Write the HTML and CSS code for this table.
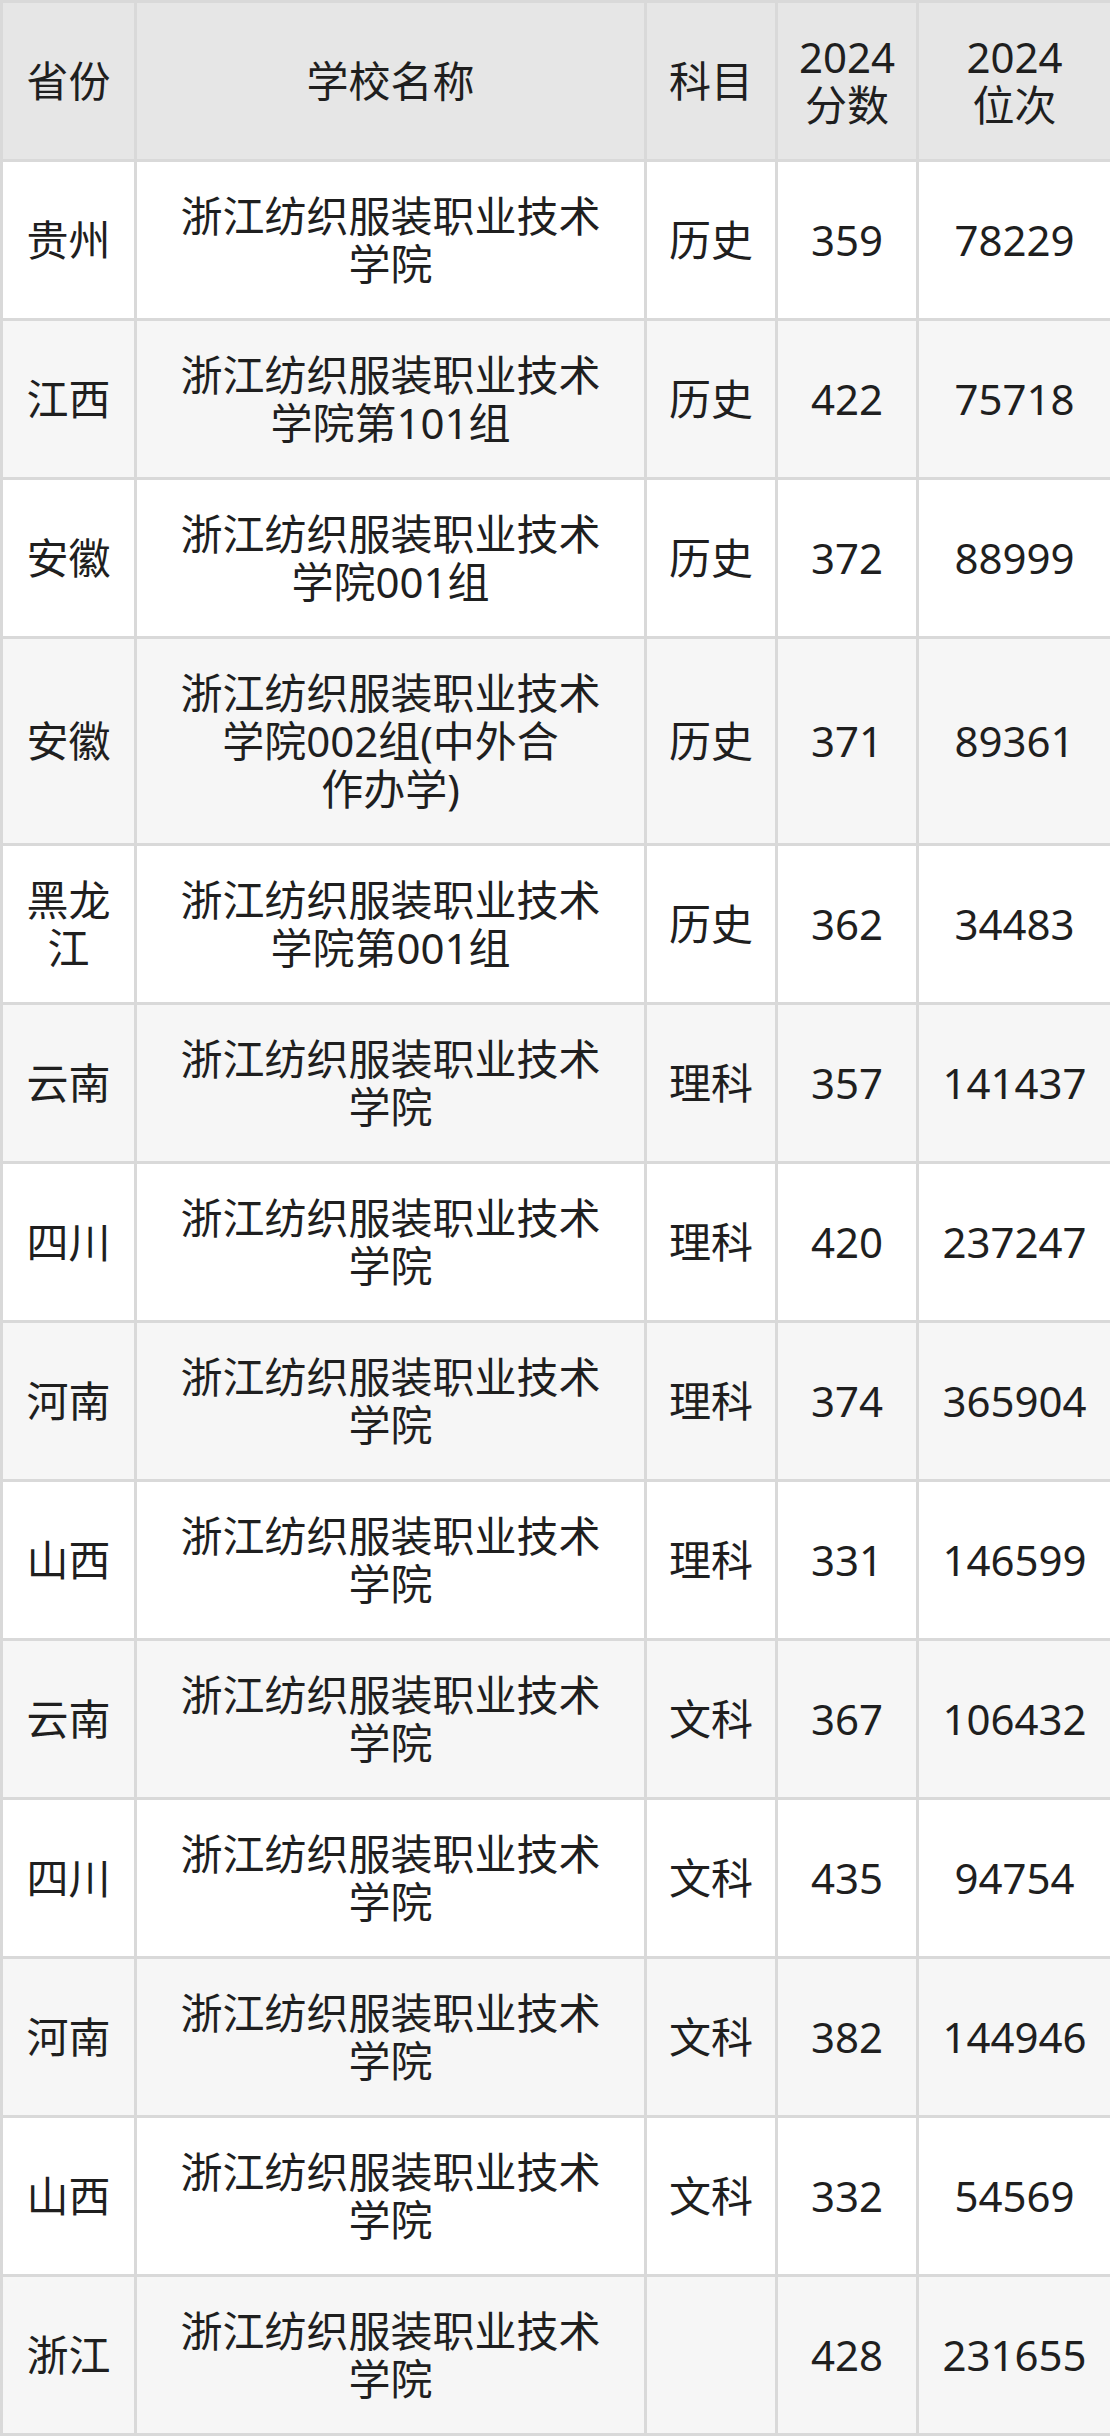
FILE: index.html
```html
<!DOCTYPE html>
<html lang="zh-CN">
<head>
<meta charset="utf-8">
<title>浙江纺织服装职业技术学院 2024 分数</title>
<link rel="stylesheet" href="styles.css">
</head>
<body>
<table class="score-table">
  <colgroup>
    <col class="c-prov">
    <col class="c-name">
    <col class="c-subj">
    <col class="c-score">
    <col class="c-rank">
  </colgroup>
  <thead>
    <tr><th>省份</th><th>学校名称</th><th>科目</th><th>2024<br>分数</th><th>2024<br>位次</th></tr>
  </thead>
  <tbody>
    <tr><td>贵州</td><td>浙江纺织服装职业技术学院</td><td>历史</td><td>359</td><td>78229</td></tr>
    <tr><td>江西</td><td>浙江纺织服装职业技术学院第101组</td><td>历史</td><td>422</td><td>75718</td></tr>
    <tr><td>安徽</td><td>浙江纺织服装职业技术学院001组</td><td>历史</td><td>372</td><td>88999</td></tr>
    <tr><td>安徽</td><td>浙江纺织服装职业技术学院002组(中外合<br>作办学)</td><td>历史</td><td>371</td><td>89361</td></tr>
    <tr><td>黑龙江</td><td>浙江纺织服装职业技术学院第001组</td><td>历史</td><td>362</td><td>34483</td></tr>
    <tr><td>云南</td><td>浙江纺织服装职业技术学院</td><td>理科</td><td>357</td><td>141437</td></tr>
    <tr><td>四川</td><td>浙江纺织服装职业技术学院</td><td>理科</td><td>420</td><td>237247</td></tr>
    <tr><td>河南</td><td>浙江纺织服装职业技术学院</td><td>理科</td><td>374</td><td>365904</td></tr>
    <tr><td>山西</td><td>浙江纺织服装职业技术学院</td><td>理科</td><td>331</td><td>146599</td></tr>
    <tr><td>云南</td><td>浙江纺织服装职业技术学院</td><td>文科</td><td>367</td><td>106432</td></tr>
    <tr><td>四川</td><td>浙江纺织服装职业技术学院</td><td>文科</td><td>435</td><td>94754</td></tr>
    <tr><td>河南</td><td>浙江纺织服装职业技术学院</td><td>文科</td><td>382</td><td>144946</td></tr>
    <tr><td>山西</td><td>浙江纺织服装职业技术学院</td><td>文科</td><td>332</td><td>54569</td></tr>
    <tr><td>浙江</td><td>浙江纺织服装职业技术学院</td><td></td><td>428</td><td>231655</td></tr>
  </tbody>
</table>
</body>
</html>
```
FILE: styles.css
```css
html, body {
  margin: 0;
  padding: 0;
  background: #ffffff;
}

body {
  font-family: "Noto Sans", "Noto Sans CJK SC", sans-serif;
  color: #1f1f1f;
}

.score-table {
  width: 1110px;
  table-layout: fixed;
  border-collapse: collapse;
  border: 3px solid #d9d9d9;
}

.c-prov { width: 134px; }
.c-name { width: 510px; }
.c-subj { width: 131px; }
.c-score { width: 141px; }
.c-rank { width: 194px; }

.score-table th,
.score-table td {
  border: 3px solid #d9d9d9;
  padding: 30px 6px;
  font-size: 42px;
  line-height: 48px;
  font-weight: 400;
  text-align: center;
  vertical-align: middle;
}

.score-table td:nth-child(2),
.score-table th:nth-child(2) {
  padding-left: 30px;
  padding-right: 30px;
}

.score-table thead tr {
  background: #e6e6e6;
}

.score-table tbody tr:nth-child(even) {
  background: #f6f6f6;
}

.score-table tbody tr:nth-child(odd) {
  background: #ffffff;
}
```
